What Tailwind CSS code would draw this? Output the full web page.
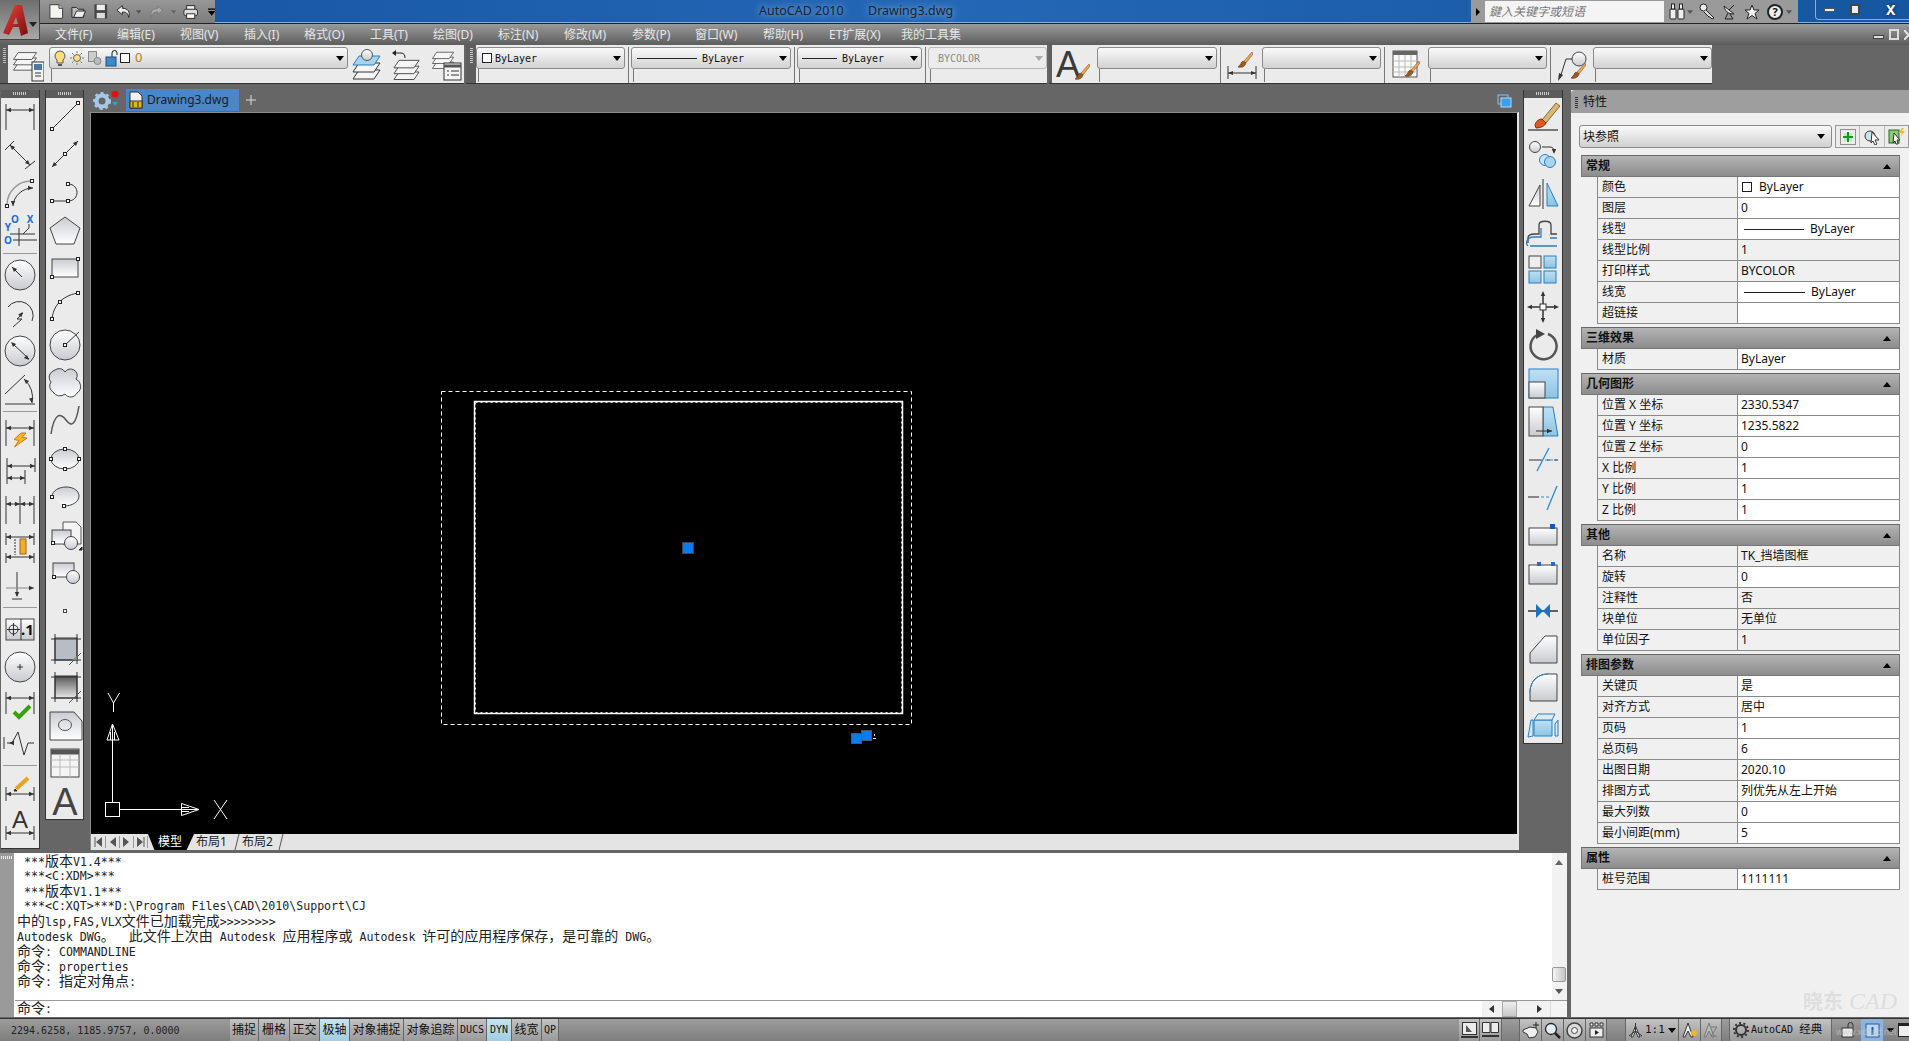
<!DOCTYPE html>
<html lang="zh-CN">
<head>
<meta charset="UTF-8">
<title>AutoCAD 2010 - Drawing3.dwg</title>
<script src="https://cdn.jsdelivr.net/npm/@tailwindcss/browser@4"></script>
</head>
<body class="bg-[#666666] overflow-hidden">
<!-- shared gradients and repeated glyphs -->
<svg class="absolute w-0 h-0">
  <defs>
    <linearGradient id="g" x1="0" y1="0" x2="0" y2="1"><stop offset="0" stop-color="#c9ccd2"/><stop offset="1" stop-color="#ffffff"/></linearGradient>
    <linearGradient id="gd" x1="0" y1="0" x2="0" y2="1"><stop offset="0" stop-color="#ffffff"/><stop offset="1" stop-color="#c8cacf"/></linearGradient>
    <linearGradient id="gb" x1="0" y1="0" x2="0" y2="1"><stop offset="0" stop-color="#bfe0f2"/><stop offset="1" stop-color="#8cc4e4"/></linearGradient>
    <linearGradient id="gh" x1="0" y1="0" x2="0" y2="1"><stop offset="0" stop-color="#555555"/><stop offset="1" stop-color="#e8e8e8"/></linearGradient>
    <linearGradient id="gr" x1="0" y1="0" x2="1" y2="1"><stop offset="0" stop-color="#e8453a"/><stop offset="1" stop-color="#7c0d0d"/></linearGradient>
    <symbol id="layers" viewBox="0 0 34 30"><g fill="#f6f6f6" stroke="#333"><path d="M8 18h24l-6 9H2z"/><path d="M8 11h24l-6 9H2z"/><path d="M8 4h24l-6 9H2z"/></g></symbol>
    <symbol id="brush" viewBox="0 0 16 20"><path d="M15 1L7 10l2 2 7-9z" fill="#e9a45c" stroke="#8a5a22" stroke-width=".6"/><path d="M6 10c-2 1-2 4-5 6 3 1 7 0 8-4z" fill="#9b5a24" stroke="#5a3210" stroke-width=".6"/></symbol>
  </defs>
</svg>

<div class="relative w-[1909px] h-[1041px] flex flex-col font-['Noto_Sans','Noto_Sans_CJK_SC',sans-serif] text-[12px] text-[#111] overflow-hidden">

  <!-- title bar -->
  <div class="h-[24px] flex bg-gradient-to-r from-[#1554a2] via-[#2467b6] to-[#14569f] border-b border-[#222] shadow-[inset_0_-1px_0_#7fb0de]">
    <div class="w-[215px] h-[23px] pl-[49px] flex items-center gap-[7px] bg-gradient-to-b from-[#989898] to-[#7c7c7c]">
      <svg class="w-[16px] h-[17px]" viewBox="0 0 16 17"><path d="M1 1h10l4 4v11H1z" fill="#f4f4f0" stroke="#333"/><path d="M11 1v4h4" fill="#ccc" stroke="#333"/></svg>
      <svg class="w-[17px] h-[15px]" viewBox="0 0 17 15"><path d="M1 3h5l2 2h6v9H1z" fill="#bbb" stroke="#222"/><path d="M3 14l3-7h10l-3 7z" fill="#eee" stroke="#222"/></svg>
      <svg class="w-[15px] h-[17px] ml-[1px]" viewBox="0 0 15 17"><rect x=".5" y=".5" width="14" height="16" rx="1" fill="#444"/><rect x="3" y="1" width="9" height="6" fill="#eee"/><rect x="3" y="10" width="9" height="6" fill="#ddd"/></svg>
      <svg class="w-[17px] h-[15px] ml-[1px]" viewBox="0 0 17 15"><path d="M7 1L1 6l6 5V8c4 0 6 1 7 6 2-6-1-10-7-10z" fill="#eee" stroke="#222"/></svg>
      <svg class="w-[6px] h-[4px] -ml-[2px]" viewBox="0 0 8 5"><path d="M0 0h8L4 5z" fill="#555"/></svg>
      <svg class="w-[16px] h-[15px] ml-[1px]" viewBox="0 0 17 15"><path d="M10 1l6 5-6 5V8c-4 0-6 1-7 6-2-6 1-10 7-10z" fill="#aaa" stroke="#777"/></svg>
      <svg class="w-[6px] h-[4px]" viewBox="0 0 8 5"><path d="M0 0h8L4 5z" fill="#666"/></svg>
      <svg class="w-[17px] h-[16px]" viewBox="0 0 17 16"><rect x="4" y="1" width="9" height="5" fill="#eee" stroke="#222"/><rect x="1" y="5" width="15" height="7" rx="2" fill="#ddd" stroke="#222"/><rect x="4" y="10" width="9" height="5" fill="#fff" stroke="#222"/></svg>
      <svg class="w-[8px] h-[8px] ml-[2px]" viewBox="0 0 8 8"><path d="M0 0h8v1.500H0zM0 3h8L4 8z"/></svg>
    </div>
    <div class="pl-[544px] flex items-center h-[23px] text-[12.5px] text-[#1c2430] [text-shadow:0_0_7px_#a9d0f4]">
      <span class="w-[109px]">AutoCAD 2010</span><span>Drawing3.dwg</span>
    </div>
    <div class="ml-auto mr-[111px] w-[327px] h-[23px] flex items-center bg-[#9a9a9a]">
      <svg class="w-[4px] h-[8px] ml-[5px]" viewBox="0 0 4 8"><path d="M0 0l4 4-4 4z"/></svg>
      <div class="ml-[5px] w-[179px] h-[21px] bg-[#f4f4f4] pl-[4px] italic text-[#777] text-[12px] leading-[21px]">鍵入关键字或短语</div>
      <svg class="ml-[5px] w-[16px] h-[17px]" viewBox="0 0 16 17"><g fill="#eee" stroke="#222"><rect x="1" y="6" width="6" height="10" rx="1"/><rect x="9" y="6" width="6" height="10" rx="1"/><rect x="2.500" y="1" width="3" height="5"/><rect x="10.500" y="1" width="3" height="5"/></g></svg>
      <svg class="w-[6px] h-[4px] ml-[2px]" viewBox="0 0 8 5"><path d="M0 0h8L4 5z" fill="#555"/></svg>
      <svg class="ml-[6px] w-[16px] h-[17px]" viewBox="0 0 16 17"><circle cx="4.500" cy="4.500" r="3.500" fill="#eee" stroke="#222"/><path d="M7 7l8 8-2 1-2-2-1 0-5-5" fill="#ddd" stroke="#222"/></svg>
      <svg class="ml-[7px] w-[15px] h-[17px]" viewBox="0 0 15 17"><path d="M2 3c1 5 4 8 10 8z" fill="#eee" stroke="#222"/><path d="M6 10l-3 6h8L8 11M7 7l5-5" stroke="#222" fill="none"/></svg>
      <svg class="ml-[7px] w-[16px] h-[16px]" viewBox="0 0 16 16"><path d="M8 1l2 5h5l-4 3.500 2 5.500-5-3.500L3 15l2-5.500L1 6h5z" fill="#f2f2f2" stroke="#222"/></svg>
      <span class="ml-[7px] w-[16px] h-[16px] rounded-full border-2 border-[#222] bg-[#eee] text-[11px] leading-[12px] text-center font-bold">?</span>
      <svg class="w-[6px] h-[4px] ml-[3px]" viewBox="0 0 8 5"><path d="M0 0h8L4 5z" fill="#555"/></svg>
    </div>
  </div>
  <!-- window buttons over the title bar -->
  <div class="absolute left-[1815px] top-0 w-[94px] h-[20px] border-l border-b border-[#7fb0de] rounded-bl-[4px] flex items-center text-white">
    <span class="ml-[8px] w-[11px] h-[4px] bg-[#e8eef4] border border-[#555]"></span>
    <span class="ml-[15px] w-[10px] h-[11px] border-2 border-[#444] bg-[#e8eef4]"></span>
    <span class="ml-[26px] font-bold text-[14px] leading-none [text-shadow:0_0_3px_#222]">X</span>
  </div>

  <!-- application button -->
  <div class="absolute left-0 top-0 w-[40px] h-[40px] bg-gradient-to-b from-[#6e6e6e] to-[#a8a8a8] border-r border-b border-[#444]">
    <svg class="absolute left-[3px] top-[3px] w-[30px] h-[34px]" viewBox="0 0 30 34"><path d="M12 2h7l6 28-7 3-2-9h-6l-4 8-6-2z" fill="url(#gr)"/><path d="M13 14l-3 7h5z" fill="#8e8e8e"/></svg>
    <svg class="absolute left-[29px] top-[22px] w-[8px] h-[5px]" viewBox="0 0 8 5"><path d="M0 0h8L4 5z" fill="#222"/></svg>
  </div>

  <!-- menu bar -->
  <div class="h-[21px] flex items-center pl-[55px] bg-gradient-to-b from-[#9a9a9a] via-[#7c7c7c] to-[#5c5c5c] text-[#e6e6e6]">
    <span class="w-[62px]">文件(F)</span><span class="w-[63px]">编辑(E)</span><span class="w-[64px]">视图(V)</span><span class="w-[60px]">插入(I)</span><span class="w-[66px]">格式(O)</span><span class="w-[63px]">工具(T)</span><span class="w-[65px]">绘图(D)</span><span class="w-[66px]">标注(N)</span><span class="w-[68px]">修改(M)</span><span class="w-[63px]">参数(P)</span><span class="w-[68px]">窗口(W)</span><span class="w-[66px]">帮助(H)</span><span class="w-[72px]">ET扩展(X)</span><span>我的工具集</span>
    <div class="ml-auto flex items-center gap-[5px]">
      <span class="w-[11px] h-[4px] bg-[#ddd] border border-[#444] mt-[4px]"></span>
      <span class="w-[10px] h-[11px] border-2 border-[#ddd]"></span>
      <svg class="w-[5px] h-[10px]" viewBox="0 0 5 10"><path d="M0 0l9 10M9 0L0 10" stroke="#e6e6e6" stroke-width="2"/></svg>
    </div>
  </div>

  <!-- toolbars -->
  <div class="h-[39px] flex gap-[2px] font-['DejaVu_Sans_Mono',monospace] text-[10px]">
    <!-- layer toolbar -->
    <div class="w-[464px] flex bg-[#ebebeb] border-b border-[#333]">
      <div class="w-[8px] h-full bg-[#5e5e5e] pt-[3px] pl-[3px]"><div class="w-[3px] h-[15px] bg-[repeating-linear-gradient(0deg,#bbb_0_1px,transparent_1px_2px)]"></div></div>
      <div class="w-[41px] pt-[3px] pl-[4px]">
        <svg class="w-[32px] h-[34px]" viewBox="0 0 32 34"><use href="#layers" width="26" height="24" y="1"/><rect x="20" y="14" width="12" height="19" fill="#f2f2f2" stroke="#333"/><rect x="22" y="16" width="8" height="6" fill="#4a7aa8"/><path d="M23 25h6M23 28h6" stroke="#333"/></svg>
      </div>
      <div class="w-[299px] pt-[2px]">
        <div class="h-[22px] flex items-center rounded-[3px] border border-[#8a8a8a] bg-gradient-to-b from-[#fafafa] to-[#d2d2d2] pl-[4px] pr-[3px] font-['Noto_Sans']">
          <svg class="w-[12px] h-[17px]" viewBox="0 0 12 17"><path d="M6 1a5 5 0 0 1 3 9v3H3v-3a5 5 0 0 1 3-9z" fill="#f7e07c" stroke="#555"/><path d="M4 15h4" stroke="#555" stroke-width="2"/></svg>
          <svg class="w-[14px] h-[14px] ml-[4px]" viewBox="0 0 14 14"><circle cx="7" cy="7" r="3.500" fill="#f7e07c" stroke="#666"/><path d="M7 0v2M7 12v2M0 7h2M12 7h2M2 2l1.500 1.500M10.500 10.500L12 12M2 12l1.500-1.500M10.500 3.500L12 2" stroke="#777"/></svg>
          <svg class="w-[14px] h-[15px] ml-[4px]" viewBox="0 0 14 15"><rect x=".5" y=".5" width="8" height="10" fill="#ccc" stroke="#888"/><circle cx="9.500" cy="10" r="3.500" fill="#bbb" stroke="#888"/></svg>
          <svg class="w-[13px] h-[17px] ml-[3px]" viewBox="0 0 13 17"><path d="M7 7V3a2.500 2.500 0 0 1 5 0v2" fill="none" stroke="#222"/><rect x="1" y="7" width="10" height="9" fill="#3d8ac8" stroke="#1c4f82"/></svg>
          <span class="w-[10px] h-[10px] bg-white border border-[#222] ml-[2px]"></span>
          <span class="ml-[5px] text-[13px] text-[#b87a22]">0</span>
          <svg class="ml-auto w-[8px] h-[5px]" viewBox="0 0 8 5"><path d="M0 0h8L4 5z"/></svg>
        </div>
        <div class="h-[13px] border-l border-[#777] ml-[2px]"></div>
      </div>
      <svg class="ml-[4px] mt-[3px] w-[30px] h-[34px]" viewBox="0 0 30 34"><g stroke="#333"><path d="M7 22h21l-6 9H1z" fill="#f6f6f6"/><path d="M7 15h21l-6 9H1z" fill="#f6f6f6"/><path d="M7 8h21l-6 9H1z" fill="#a4d4f2" stroke="#2a7fc0"/></g><circle cx="15" cy="7" r="5.500" fill="url(#gd)" stroke="#555"/></svg>
      <svg class="ml-[10px] mt-[3px] w-[29px] h-[34px]" viewBox="0 0 29 34"><use href="#layers" width="29" height="25" y="9"/><path d="M2 5h7c3 0 4 2 4 5" fill="none" stroke="#222"/><path d="M0 5l4-3v6z" fill="#222"/></svg>
      <svg class="ml-[10px] mt-[3px] w-[31px] h-[34px]" viewBox="0 0 31 34"><use href="#layers" width="24" height="22" y="1"/><rect x="13" y="15" width="17" height="17" fill="#f4f4f4" stroke="#333"/><path d="M13 18h17" stroke="#555" stroke-width="3"/><path d="M16 23h2M20 23h8M16 27h2M20 27h8" stroke="#333"/></svg>
    </div>
    <!-- properties toolbar -->
    <div class="w-[581px] flex bg-[#ebebeb] border-b border-[#333]">
      <div class="w-[10px] h-full bg-[#5e5e5e] pt-[3px] pl-[4px]"><div class="w-[3px] h-[15px] bg-[repeating-linear-gradient(0deg,#ccc_0_1px,transparent_1px_2px)]"></div></div>
      <div class="w-[149px] pt-[2px]">
        <div class="h-[22px] flex items-center rounded-[3px] border border-[#8a8a8a] bg-gradient-to-b from-[#fafafa] to-[#d2d2d2] pl-[5px] pr-[3px]"><span class="w-[10px] h-[10px] bg-white border border-[#222] mr-[3px]"></span>ByLayer<svg class="ml-auto w-[8px] h-[5px]" viewBox="0 0 8 5"><path d="M0 0h8L4 5z"/></svg></div>
        <div class="h-[13px] border-l border-[#777] ml-[2px]"></div>
      </div>
      <div class="w-[6px] flex justify-center"><div class="w-px h-[36px] mt-[2px] bg-[#777]"></div></div>
      <div class="w-[160px] pt-[2px]">
        <div class="h-[22px] flex items-center rounded-[3px] border border-[#8a8a8a] bg-gradient-to-b from-[#fafafa] to-[#d2d2d2] pl-[5px] pr-[3px]"><span class="w-[60px] h-px bg-[#222] mr-[5px]"></span>ByLayer<svg class="ml-auto w-[8px] h-[5px]" viewBox="0 0 8 5"><path d="M0 0h8L4 5z"/></svg></div>
        <div class="h-[13px] border-l border-[#777] ml-[2px]"></div>
      </div>
      <div class="w-[6px] flex justify-center"><div class="w-px h-[36px] mt-[2px] bg-[#777]"></div></div>
      <div class="w-[125px] pt-[2px]">
        <div class="h-[22px] flex items-center rounded-[3px] border border-[#8a8a8a] bg-gradient-to-b from-[#fafafa] to-[#d2d2d2] pl-[4px] pr-[3px]"><span class="w-[35px] h-px bg-[#222] mr-[5px]"></span>ByLayer<svg class="ml-auto w-[8px] h-[5px]" viewBox="0 0 8 5"><path d="M0 0h8L4 5z"/></svg></div>
        <div class="h-[13px] border-l border-[#777] ml-[2px]"></div>
      </div>
      <div class="w-[6px] flex justify-center"><div class="w-px h-[36px] mt-[2px] bg-[#777]"></div></div>
      <div class="w-[119px] pt-[2px]">
        <div class="h-[22px] flex items-center rounded-[3px] border border-[#bbb] bg-[#ececec] pl-[9px] pr-[3px] text-[#8a8a8a]">BYCOLOR<svg class="ml-auto w-[8px] h-[5px]" viewBox="0 0 8 5"><path d="M0 0h8L4 5z" fill="#aaa"/></svg></div>
        <div class="h-[13px] border-l border-[#777] ml-[2px]"></div>
      </div>
    </div>
    <!-- styles toolbar -->
    <div class="w-[663px] flex bg-[#ebebeb] border-b border-[#333]">
      <div class="w-[3px] h-full bg-[#5e5e5e]"></div>
      <div class="w-[45px] pl-[2px] pt-[3px]">
        <div class="relative w-[40px] h-[34px]"><span class="absolute left-[2px] -top-[5px] font-['Liberation_Sans'] text-[36px] leading-[44px] text-[#3a3a3a]">A</span><svg class="absolute left-[20px] top-[15px] w-[16px] h-[20px]"><use href="#brush"/></svg></div>
      </div>
      <div class="w-[120px] pt-[2px]">
        <div class="h-[22px] flex items-center rounded-[3px] border border-[#8a8a8a] bg-gradient-to-b from-[#fafafa] to-[#d2d2d2] pr-[3px]"><svg class="ml-auto w-[8px] h-[5px]" viewBox="0 0 8 5"><path d="M0 0h8L4 5z"/></svg></div>
        <div class="h-[13px] border-l border-[#777] ml-[2px]"></div>
      </div>
      <div class="w-[45px] pl-[3px] flex">
        <div class="w-px h-[36px] mt-[2px] bg-[#777]"></div>
        <svg class="ml-[6px] mt-[6px] w-[30px] h-[28px]" viewBox="0 0 30 28"><path d="M1 15v13M29 15v13M1 22h28" stroke="#333" fill="none"/><path d="M1 22l5-2v4zM29 22l-5-2v4z" fill="#333"/><use href="#brush" x="10" y="0" width="16" height="20"/></svg>
      </div>
      <div class="w-[119px] pt-[2px]">
        <div class="h-[22px] flex items-center rounded-[3px] border border-[#8a8a8a] bg-gradient-to-b from-[#fafafa] to-[#d2d2d2] pr-[3px]"><svg class="ml-auto w-[8px] h-[5px]" viewBox="0 0 8 5"><path d="M0 0h8L4 5z"/></svg></div>
        <div class="h-[13px] border-l border-[#777] ml-[2px]"></div>
      </div>
      <div class="w-[47px] pl-[3px] flex">
        <div class="w-px h-[36px] mt-[2px] bg-[#777]"></div>
        <svg class="ml-[7px] mt-[5px] w-[28px] h-[30px]" viewBox="0 0 28 30"><rect x="1" y="1" width="24" height="26" fill="#fafafa" stroke="#555"/><path d="M1 3h24" stroke="#666" stroke-width="4"/><path d="M7 5v22M13 5v22M19 5v22M1 11h24M1 17h24M1 22h24" stroke="#bbb"/><use href="#brush" x="12" y="10" width="16" height="20"/></svg>
      </div>
      <div class="w-[119px] pt-[2px]">
        <div class="h-[22px] flex items-center rounded-[3px] border border-[#8a8a8a] bg-gradient-to-b from-[#fafafa] to-[#d2d2d2] pr-[3px]"><svg class="ml-auto w-[8px] h-[5px]" viewBox="0 0 8 5"><path d="M0 0h8L4 5z"/></svg></div>
        <div class="h-[13px] border-l border-[#777] ml-[2px]"></div>
      </div>
      <div class="w-[46px] pl-[3px] flex">
        <div class="w-px h-[36px] mt-[2px] bg-[#777]"></div>
        <svg class="ml-[6px] mt-[5px] w-[30px] h-[32px]" viewBox="0 0 30 32"><circle cx="22" cy="9" r="7" fill="url(#gd)" stroke="#444"/><path d="M15 9H9L3 28" fill="none" stroke="#333"/><path d="M1 31l1-8 4 2z" fill="#333"/><use href="#brush" x="13" y="12" width="16" height="20"/></svg>
      </div>
      <div class="flex-1 pt-[2px]">
        <div class="h-[22px] flex items-center rounded-[3px] border border-[#8a8a8a] bg-gradient-to-b from-[#fafafa] to-[#d2d2d2] pr-[3px]"><svg class="ml-auto w-[8px] h-[5px]" viewBox="0 0 8 5"><path d="M0 0h8L4 5z"/></svg></div>
        <div class="h-[13px] border-l border-[#777] ml-[2px]"></div>
      </div>
    </div>
  </div>

  <!-- main area -->
  <div class="flex-1 flex min-h-0">
    <div class="w-[1567px] flex flex-col">
      <div class="h-[769px] flex">
        <!-- draw and dimension toolbars -->
        <div class="w-[90px] pt-[6px] flex items-start pl-[1px] gap-[5px]">
          <div class="w-[39px] h-[759px] bg-[#ebebeb] border-r border-b border-[#333]">
            <div class="h-[8px] bg-[#5c5c5c] flex justify-center pt-[2px]"><div class="w-[14px] h-[3px] bg-[repeating-linear-gradient(90deg,#ccc_0_1px,transparent_1px_2px)]"></div></div>
            <div id="dimTools"></div>
          </div>
          <div class="w-[39px] h-[730px] bg-[#ebebeb] border border-t-0 border-[#333]">
            <div class="h-[8px] bg-[#5c5c5c] flex justify-center pt-[2px]"><div class="w-[14px] h-[3px] bg-[repeating-linear-gradient(90deg,#ccc_0_1px,transparent_1px_2px)]"></div></div>
            <div id="drawTools"></div>
          </div>
        </div>

        <!-- drawing area -->
        <div class="w-[1429px] flex flex-col">
          <div class="h-[28px] relative">
            <div class="absolute left-[36px] top-[5px] w-[113px] h-[22px] bg-[#4a86c8] flex items-center pl-[3px] text-[12px] text-[#1c1c1c] font-['Noto_Sans']">
              <svg class="w-[14px] h-[18px] mr-[4px]" viewBox="0 0 14 18"><path d="M1 1h8l4 4v12H1z" fill="#eef2f6" stroke="#333"/><rect x="1" y="10" width="12" height="7" fill="#e6b422" stroke="#333"/><path d="M4 11v5M9 11v5" stroke="#222"/></svg>Drawing3.dwg
            </div>
            <svg class="absolute left-[2px] top-[7px] w-[28px] h-[20px]" viewBox="0 0 28 20"><circle cx="10" cy="10" r="5.500" fill="none" stroke="#a8c8e8" stroke-width="4"/><circle cx="10" cy="10" r="8" fill="none" stroke="#a8c8e8" stroke-width="2" stroke-dasharray="3 3"/><circle cx="23" cy="3" r="3.500" fill="#e01010"/><path d="M20 11h6l-3 4z" fill="#3a9ae0"/></svg>
            <svg class="absolute left-[156px] top-[11px] w-[10px] h-[10px]" viewBox="0 0 10 10"><path d="M5 0v10M0 5h10" stroke="#ddd"/></svg>
            <svg class="absolute left-[1407px] top-[10px] w-[15px] h-[14px]" viewBox="0 0 15 14"><rect x="1" y="1" width="10" height="9" fill="none" stroke="#7cc4f4"/><rect x="4" y="4" width="10" height="9" fill="#3aa0ea" stroke="#a8dcff"/></svg>
          </div>
          <div class="h-[722px] bg-black border-l border-t border-[#8c8c8c] border-r-2 border-r-[#e4e4e4]">
            <svg class="w-full h-full" viewBox="91 113 1426 721">
              <rect x="441.500" y="391.500" width="470" height="333" fill="none" stroke="#fff" stroke-dasharray="4 3"/>
              <rect x="474.500" y="401.500" width="428" height="312" fill="none" stroke="#fff" stroke-width="1.500"/>
              <rect x="475.500" y="402.500" width="426" height="310" fill="none" stroke="#ddd" stroke-dasharray="2 3"/>
              <rect x="682.500" y="542.500" width="11" height="11" fill="#0a7cf0" stroke="#444"/>
              <rect x="851.500" y="733.500" width="10" height="10" fill="#0a7cf0" stroke="#555"/>
              <rect x="861.500" y="730.500" width="10" height="10" fill="#0a7cf0" stroke="#555"/>
              <path d="M874.500 734v2M874.500 738v1M873 738.500h3" stroke="#fff"/>
              <g fill="none" stroke="#fff">
                <rect x="105.500" y="802.500" width="14" height="14"/>
                <path d="M112.500 802V740M119 809.500H181"/>
                <path d="M112.500 724L107 740H119zM112.500 724v16M110.500 732v8M114.500 732v8"/>
                <path d="M199 809.500L181.500 803.500v12zM181.500 809.500H199M189 807.500h-7M189 811.500h-7"/>
                <path d="M108 693l5.500 10 6-10M113.500 703v9"/>
                <path d="M214 800l13 19M227 800l-13 19"/>
              </g>
            </svg>
          </div>
          <!-- layout tabs -->
          <div class="h-[16px] bg-[#e4e4e4] border-l border-[#8c8c8c] flex items-center text-[12px] leading-none">
            <svg class="w-[57px] h-[16px]" viewBox="0 0 57 16"><g stroke="#999" fill="none"><path d="M14.500 2v12M28.500 2v12M42.500 2v12M56.500 2v12"/></g><g fill="#555"><path d="M11 3v10L5 8zM25 3v10l-6-5zM32 3v10l6-5zM46 3v10l6-5z"/><path d="M4 3v10M53 3v10" stroke="#555"/></g></svg>
            <span class="h-[16px] w-[46px] pl-[10px] bg-black text-white leading-[16px] [clip-path:polygon(0_0,100%_0,84%_100%,14%_100%)]">模型</span>
            <span class="w-[40px] pl-[2px] text-[#222]">布局1</span>
            <svg class="w-[6px] h-[16px]" viewBox="0 0 6 16"><path d="M1 16L5 0" stroke="#555"/></svg>
            <span class="w-[38px] pl-[2px] text-[#222]">布局2</span>
            <svg class="w-[6px] h-[16px]" viewBox="0 0 6 16"><path d="M1 16L5 0" stroke="#555"/></svg>
          </div>
        </div>

        <!-- modify toolbar -->
        <div class="ml-[4px] pt-[6px]">
          <div class="w-[40px] h-[654px] bg-[#ebebeb] border border-t-0 border-[#333]">
            <div class="h-[8px] bg-[#5c5c5c] flex justify-center pt-[2px]"><div class="w-[14px] h-[3px] bg-[repeating-linear-gradient(90deg,#ccc_0_1px,transparent_1px_2px)]"></div></div>
            <div id="modifyTools"></div>
          </div>
        </div>
      </div>

      <!-- command window -->
      <div class="h-[164px] flex">
        <div class="w-[15px] bg-[#9a9a9a] border-r border-white pt-[3px] pl-[1px]"><div class="w-[11px] h-[3px] bg-[repeating-linear-gradient(90deg,#eee_0_1px,transparent_1px_2px)]"></div></div>
        <div class="flex-1 bg-white flex flex-col font-['DejaVu_Sans_Mono','Noto_Sans_CJK_SC',monospace] text-[11.6px] text-[#222]">
          <div class="h-[147px] flex">
            <div id="cmdLog" class="flex-1 pt-[1px] pl-[2px] whitespace-pre"></div>
            <div class="w-[15px] bg-[#f2f2f2] relative">
              <svg class="absolute left-[3px] top-[7px] w-[8px] h-[5px]" viewBox="0 0 8 5"><path d="M4 0l4 5H0z" fill="#666"/></svg>
              <div class="absolute left-0 top-[114px] w-[14px] h-[15px] border border-[#999] rounded-[2px] bg-gradient-to-r from-[#f4f4f4] to-[#c4c4c4]"></div>
              <svg class="absolute left-[3px] top-[136px] w-[8px] h-[5px]" viewBox="0 0 8 5"><path d="M0 0h8L4 5z" fill="#555"/></svg>
            </div>
          </div>
          <div class="h-[17px] border-t border-[#999] flex">
            <div class="flex-1 pl-[2px] leading-[16px]"><span class="text-[14px] leading-none">命令</span>:</div>
            <div class="w-[68px] bg-[#f2f2f2] relative">
              <svg class="absolute left-[7px] top-[4px] w-[5px] h-[8px]" viewBox="0 0 5 8"><path d="M5 0v8L0 4z" fill="#333"/></svg>
              <div class="absolute left-[20px] top-0 w-[15px] h-[16px] border border-[#aaa] bg-gradient-to-b from-[#eee] to-[#c8c8c8]"></div>
              <svg class="absolute left-[55px] top-[4px] w-[5px] h-[8px]" viewBox="0 0 5 8"><path d="M0 0v8l5-4z" fill="#333"/></svg>
            </div>
            <div class="w-[17px] bg-[#f4f4f4] border-l border-[#ddd]"></div>
          </div>
        </div>
      </div>
    </div>

    <!-- properties palette -->
    <div class="ml-[4px] mt-[6px] w-[338px] h-[927px] flex flex-col bg-[#f0f0f0] relative">
      <div class="h-[23px] bg-[#9e9e9e] rounded-tl-[4px] flex items-center pl-[4px]">
        <div class="w-[3px] h-[12px] bg-[repeating-linear-gradient(0deg,#333_0_1px,transparent_1px_2px)]"></div>
        <span class="ml-[5px]">特性</span>
      </div>
      <div class="h-[42px] flex items-center pl-[8px] pt-[5px]">
        <div class="w-[253px] h-[23px] flex items-center rounded-[3px] border border-[#8a8a8a] bg-gradient-to-b from-[#fafafa] to-[#d0d0d0] pl-[3px] pr-[6px]">块参照<svg class="ml-auto w-[8px] h-[5px]" viewBox="0 0 8 5"><path d="M0 0h8L4 5z"/></svg></div>
        <div class="ml-[3px] flex h-[23px] bg-[#ececec] border border-[#999]">
          <div class="w-[24px] border-r border-[#bbb] flex items-center justify-center"><svg class="w-[16px] h-[16px]" viewBox="0 0 16 16"><rect x=".5" y=".5" width="15" height="15" fill="none" stroke="#333" stroke-dasharray="1 1"/><rect x="4" y="4" width="8" height="8" fill="#bfe8bf"/><path d="M8 3v10M3 8h10" stroke="#0a9a20" stroke-width="2"/></svg></div>
          <div class="w-[25px] border-r border-[#bbb] flex items-center justify-center"><svg class="w-[17px] h-[16px]" viewBox="0 0 17 16"><circle cx="6" cy="7" r="5" fill="#cde4f0" stroke="#333"/><path d="M8 3l7 8-4 0 2 4-2 1-2-4-2 2z" fill="#fff" stroke="#333"/></svg></div>
          <div class="w-[23px] flex items-center justify-center"><svg class="w-[17px] h-[17px]" viewBox="0 0 17 17"><rect x="1" y="2" width="10" height="13" fill="#8cc878" stroke="#1e6a1e"/><path d="M6 5l6 7-3 0 1 4-2 0-1-3-2 2z" fill="#fff" stroke="#333"/><path d="M14 0l-3 5h3l-2 4 5-6h-3l2-3z" fill="#f4b622"/></svg></div>
        </div>
      </div>
      <div id="propGrid" class="pl-[10px] w-[329px]"></div>
      <!-- watermark -->
      <div class="absolute left-[232px] top-[899px] flex items-baseline text-[#dedede] leading-none">
        <span class="text-[20px] font-bold">晓东</span><span class="ml-[6px] text-[24px] italic font-['Liberation_Serif']">CAD</span>
      </div>
    </div>
  </div>

  <!-- status bar -->
  <div class="h-[23px] flex items-stretch border-t border-[#333] bg-gradient-to-b from-[#9c9c9c] to-[#7e7e7e] relative">
    <div class="w-[230px] pl-[11px] flex items-center font-['DejaVu_Sans_Mono',monospace] text-[10px] text-[#222]">2294.6258, 1185.9757, 0.0000</div>
    <div class="flex text-[#111] text-center leading-[21px]">
      <span class="w-[29px] border-r border-[#666] bg-gradient-to-b from-[#c2c2c2] to-[#9a9a9a]">捕捉</span>
      <span class="w-[31px] border-r border-[#666] bg-gradient-to-b from-[#c2c2c2] to-[#9a9a9a]">栅格</span>
      <span class="w-[30px] border-r border-[#666] bg-gradient-to-b from-[#c2c2c2] to-[#9a9a9a]">正交</span>
      <span class="w-[30px] border-r border-[#666] bg-gradient-to-b from-[#c4e4f2] to-[#a2cde0]">极轴</span>
      <span class="w-[54px] border-r border-[#666] bg-gradient-to-b from-[#c2c2c2] to-[#9a9a9a]">对象捕捉</span>
      <span class="w-[54px] border-r border-[#666] bg-gradient-to-b from-[#c2c2c2] to-[#9a9a9a]">对象追踪</span>
      <span class="w-[29px] border-r border-[#666] bg-gradient-to-b from-[#c2c2c2] to-[#9a9a9a] font-['DejaVu_Sans_Mono'] text-[10px]">DUCS</span>
      <span class="w-[25px] border-r border-[#666] bg-gradient-to-b from-[#c4e4f2] to-[#a2cde0] font-['DejaVu_Sans_Mono'] text-[10px]">DYN</span>
      <span class="w-[30px] border-r border-[#666] bg-gradient-to-b from-[#c2c2c2] to-[#9a9a9a]">线宽</span>
      <span class="w-[17px] border-r border-[#666] bg-gradient-to-b from-[#c2c2c2] to-[#9a9a9a] font-['DejaVu_Sans_Mono'] text-[10px]">QP</span>
    </div>
    <div class="ml-[900px] flex items-stretch font-['DejaVu_Sans_Mono','Noto_Sans_CJK_SC',monospace] text-[10px]">
      <span class="w-[21px] border-r border-[#666] flex items-center justify-center bg-gradient-to-b from-[#c2c2c2] to-[#9a9a9a]"><svg class="w-[17px] h-[17px]" viewBox="0 0 17 17"><rect x="1.500" y=".5" width="14" height="12" fill="#ececec" stroke="#333"/><path d="M5 10V3l6 7z" fill="#555"/><path d="M0 15h17" stroke="#333" stroke-width="2"/></svg></span>
      <span class="w-[22px] border-r border-[#666] flex items-center justify-center bg-gradient-to-b from-[#c2c2c2] to-[#9a9a9a]"><svg class="w-[17px] h-[17px]" viewBox="0 0 17 17"><path d="M.5.5h7.500v10H.5zM9 .5h7.500v10H9z" fill="#ececec" stroke="#333"/><path d="M0 14h17" stroke="#333" stroke-width="2"/></svg></span>
      <span class="w-[18px] border-r border-[#666]"></span>
      <span class="w-[22px] border-r border-[#666] flex items-center justify-center bg-gradient-to-b from-[#c2c2c2] to-[#9a9a9a]"><svg class="w-[18px] h-[17px]" viewBox="0 0 18 17"><path d="M1 8l7-3 6 1 2 4-3 5-6 1-2-4-4-2z" fill="#eee" stroke="#333"/><path d="M14 0v6M11 3h6" stroke="#222"/></svg></span>
      <span class="w-[22px] border-r border-[#666] flex items-center justify-center bg-gradient-to-b from-[#c2c2c2] to-[#9a9a9a]"><svg class="w-[17px] h-[17px]" viewBox="0 0 17 17"><circle cx="7" cy="7" r="5.500" fill="#dfeef8" stroke="#222" stroke-width="1.300"/><path d="M11 11l5 5" stroke="#222" stroke-width="2.500"/></svg></span>
      <span class="w-[22px] border-r border-[#666] flex items-center justify-center bg-gradient-to-b from-[#c2c2c2] to-[#9a9a9a]"><svg class="w-[17px] h-[17px]" viewBox="0 0 17 17"><circle cx="8.500" cy="8.500" r="7.500" fill="#ddd" stroke="#444" stroke-width="1.500"/><circle cx="8.500" cy="8.500" r="3" fill="#f2f2f2" stroke="#444"/></svg></span>
      <span class="w-[21px] border-r border-[#666] flex items-center justify-center bg-gradient-to-b from-[#c2c2c2] to-[#9a9a9a]"><svg class="w-[15px] h-[16px]" viewBox="0 0 15 16"><path d="M1 1h3v3H1zM6 1h3v3H6zM11 1h3v3h-3z" fill="#eee" stroke="#333"/><rect x="1" y="6" width="13" height="9" fill="#eee" stroke="#333"/><path d="M6 8l4 2.500L6 13z" fill="#222"/></svg></span>
      <span class="w-[19px] border-r border-[#666]"></span>
      <span class="w-[53px] border-r border-[#666] flex items-center pl-[2px] bg-gradient-to-b from-[#c2c2c2] to-[#9a9a9a]"><svg class="w-[15px] h-[16px]" viewBox="0 0 15 16"><path d="M7.500 1v8M7.500 9L1 14M7.500 9L14 14M7.500 4L3 15h2l2.500-6 2.500 6h2z" fill="#eee" stroke="#333"/></svg><span class="ml-[2px] text-[11px]">1:1</span><svg class="ml-[3px] w-[8px] h-[5px]" viewBox="0 0 8 5"><path d="M0 0h8L4 5z"/></svg></span>
      <span class="w-[22px] border-r border-[#666] flex items-center justify-center bg-gradient-to-b from-[#c2c2c2] to-[#9a9a9a]"><svg class="w-[16px] h-[16px]" viewBox="0 0 16 16"><path d="M6 1L1 15h2l3-6 3 6h2z" fill="#eee" stroke="#333"/><circle cx="12" cy="11" r="3" fill="#f4b622"/></svg></span>
      <span class="w-[21px] border-r border-[#666] flex items-center justify-center bg-gradient-to-b from-[#c2c2c2] to-[#9a9a9a]"><svg class="w-[16px] h-[16px]" viewBox="0 0 16 16"><path d="M6 1L1 15h2l3-6 3 6h2z" fill="#bbb" stroke="#777"/><path d="M8 5h6L8 14h6" fill="none" stroke="#777"/></svg></span>
      <span class="w-[7px]"></span>
      <span class="w-[103px] border-l border-r border-[#666] flex items-center pl-[3px] bg-gradient-to-b from-[#c2c2c2] to-[#9a9a9a]"><svg class="w-[16px] h-[16px]" viewBox="0 0 16 16"><circle cx="8" cy="8" r="5" fill="none" stroke="#333" stroke-width="2"/><circle cx="8" cy="8" r="7" fill="none" stroke="#333" stroke-width="2" stroke-dasharray="2 2.400"/></svg><span class="ml-[2px]">AutoCAD <span class="text-[11.500px]">经典</span></span></span>
      <span class="w-[4px]"></span>
      <span class="w-[23px] flex items-center justify-center"><svg class="w-[14px] h-[16px]" viewBox="0 0 14 16"><rect x="1" y="6" width="11" height="9" fill="#ececec" stroke="#333"/><path d="M7 6V3a2.500 2.500 0 0 1 5 0v2" fill="none" stroke="#333"/></svg></span>
      <span class="w-[22px] ml-[2px] flex items-center justify-center bg-[#8fb4dc]"><svg class="w-[15px] h-[16px]" viewBox="0 0 15 16"><rect x="1" y="2" width="13" height="13" fill="#bcd8f4" stroke="#2a5a9a"/><path d="M7.500 5v8" stroke="#2a5a9a" stroke-width="2"/></svg></span>
      <svg class="ml-[4px] mt-[9px] w-[7px] h-[5px]" viewBox="0 0 8 5"><path d="M0 0h8L4 5z"/></svg>
      <span class="ml-[4px] w-[11px] h-[14px] mt-[4px] border border-[#222] border-r-0 border-t-[3px] bg-[#eee]"></span>
    </div>
    <span class="absolute left-[1836px] top-[7px] text-[9px] text-[#c8c8c8]/70 font-['Liberation_Sans']">www.xdcad.net</span>
  </div>
</div>

<script>
  // helpers for the tool icons, each icon drawn 1:1 in a 38x38 box
  const sq = (x, y) => `<rect x="${x - 1.5}" y="${y - 1.5}" width="3" height="3" fill="#fff" stroke="#222"/>`;
  const ar = (x, y, a) => `<path transform="translate(${x} ${y}) rotate(${a})" d="M0 0l-5-2.200v4.400z" fill="#333" stroke="none"/>`;
  const shade = 'fill="url(#g)" stroke="#444"';
  const glossy = 'fill="url(#gd)" stroke="#444"';
  const blue = 'fill="url(#gb)" stroke="#2a7fc0"';
  const dimTop = (y) => `<path d="M5 6v26M33 6v26M5 ${y}h28"/>` + ar(5, y, 180) + ar(33, y, 0);

  const dimIcons = [
    dimTop(12),
    `<path d="M9 9L29 29M4 14L13 5M24 33L34 25"/>` + ar(9, 9, 225) + ar(29, 29, 45),
    `<path d="M6 30A24 24 0 0 1 30 7" stroke="#999" stroke-width="1.500"/><path d="M12 32A20 19 0 0 1 32 14"/>` + sq(6, 32) + sq(31, 7) + ar(32, 14, 0) + ar(12, 32, 90),
    `<path d="M12 28h24M18 16v18M9 22h25M22 22l6-6v-4"/><text x="14" y="11" font-size="10" font-weight="700" fill="#1a6fd0" stroke="none" text-anchor="middle">O</text><text x="29" y="11" font-size="10" font-weight="700" fill="#1a6fd0" stroke="none" text-anchor="middle">X</text><text x="7" y="19" font-size="10" font-weight="700" fill="#1a6fd0" stroke="none" text-anchor="middle">Y</text><text x="7" y="32" font-size="10" font-weight="700" fill="#1a6fd0" stroke="none" text-anchor="middle">O</text>`,
    'sep',
    `<circle cx="19" cy="19" r="15" ${glossy}/><path d="M21 21L11 11"/>` + ar(11, 11, 225),
    `<path d="M7 13A14 14 0 0 1 31 27M22 19L16 25l5 0L12 33"/>` + ar(22, 18, -50),
    `<circle cx="19" cy="19" r="15" ${glossy}/><path d="M11 11L28 27"/>` + ar(10, 10, 225) + ar(28, 28, 45),
    `<path d="M4 24L24 5M4 34h30M23 9A26 26 0 0 1 31 33"/>` + ar(31, 33, 80) + ar(23, 9, 225),
    'sep',
    dimTop(14) + `<path d="M20 19l-7 6.500 5 1-4.500 6.500L26 24l-5-.500 4-4.500z" fill="#f6b821" stroke="#d4780e"/>`,
    `<path d="M6 6v26M34 6v14M24 18v14M6 14h28M6 26h18"/>` + ar(6, 14, 180) + ar(34, 14, 0) + ar(6, 26, 180) + ar(24, 26, 0),
    `<path d="M5 6v28M19 6v28M33 6v28M5 14h28"/>` + ar(5, 14, 180) + ar(19, 14, 0) + ar(19, 14, 180) + ar(33, 14, 0),
    `<path d="M5 5v12M33 5v12M5 9h28M5 25v10M33 25v10M5 29h28"/>` + ar(5, 9, 180) + ar(33, 9, 0) + ar(5, 29, 180) + ar(33, 29, 0) + `<path d="M14 11v16" stroke-dasharray="2 1"/><rect x="19" y="11" width="6" height="15" fill="#eeb02c" stroke="#9a6a10"/>`,
    `<path d="M16 6v24M11 33h10"/><path d="M5 22h28" stroke="#888"/>` + ar(16, 31, 90) + ar(33, 22, 0),
    'sep',
    `<rect x="5" y="9" width="28" height="21" ${glossy}/><path d="M20 9v21"/><circle cx="12.500" cy="19.500" r="4.500"/><path d="M6 19.500h13M12.500 13v13"/><text x="26.500" y="25" font-size="15" font-weight="700" fill="#111" stroke="none" text-anchor="middle">.1</text>`,
    `<circle cx="19" cy="19" r="15" ${glossy}/><path d="M19 16v6M16 19h6"/>`,
    `<path d="M5 6v22M33 6v22M5 12h28"/>` + ar(5, 12, 180) + ar(33, 12, 0) + `<path d="M13 26l5 5L29 20" stroke="#3aa00a" stroke-width="4"/>`,
    `<path d="M3 13v12M6 19h5L17 8l6 23 4-12h6"/>` + ar(8, 19, 180),
    'sep',
    `<path d="M5 19v14M33 19v14M5 26h28"/>` + ar(5, 26, 180) + ar(33, 26, 0) + `<path d="M15 21L27 10" stroke="#e8a420" stroke-width="4"/><path d="M13 23l1-2 2 2z" fill="#222"/>`,
    `<path d="M5 20v14M33 20v14M5 27h28"/>` + ar(5, 27, 180) + ar(33, 27, 0) + `<text x="19" y="22" font-size="24" font-family="Liberation Sans" fill="#333" stroke="none" text-anchor="middle">A</text>`,
  ];

  const drawIcons = [
    `<path d="M6 31L32 5"/>` + sq(6, 31) + sq(32, 5),
    `<path d="M6 31L32 5"/>` + ar(32, 5, -45) + ar(6, 31, 135) + sq(19, 18),
    `<path d="M6 27H22C34 27 34 10 22 10"/>` + sq(6, 27) + sq(22, 27) + sq(22, 10),
    `<path d="M19 5L34 16 28 32H10L4 16z" ${shade}/>`,
    `<rect x="6" y="9" width="26" height="18" ${shade}/>` + sq(32, 9) + sq(6, 27),
    `<path d="M6 31C7 20 14 8 32 5"/>` + sq(6, 31) + sq(14, 14) + sq(32, 5),
    `<circle cx="19" cy="19" r="15" ${glossy}/><path d="M19 19L33 6"/>` + sq(19, 19),
    `<path d="M11 5a6.500 6.500 0 0 1 8 3 6.500 6.500 0 0 1 9-2 6 6 0 0 1 2 9 8 8 0 0 1 1 14 7 7 0 0 1-12 1 8 8 0 0 1-12-2 7 7 0 0 1-2-10 7 7 0 0 1 2-11z" ${shade}/>`,
    `<path d="M5 32C8 12 14 10 20 18S30 22 33 4" stroke="#555" stroke-width="1.500"/>`,
    `<ellipse cx="19" cy="19" rx="14" ry="10" ${shade}/>` + sq(5, 19) + sq(33, 19) + sq(19, 9) + sq(19, 29),
    `<path d="M6 19C6 12 14 9 20 9 28 9 33 13 33 18 33 24 26 28 18 28" ${shade}/>` + sq(6, 19) + sq(18, 28),
    `<path d="M17 6h13l5 5v17H17z" fill="#f4f4f4" stroke="#555"/><rect x="6" y="14" width="19" height="14" ${shade}/>` + `<circle cx="25" cy="27" r="6.500" ${glossy}/><path d="M33 34h3v-3z" fill="#222" stroke="#222"/>` + sq(7, 27),
    `<rect x="7" y="9" width="21" height="14" ${shade}/><circle cx="27" cy="23" r="6.500" ${glossy}/>` + sq(8, 23),
    `<rect x="17.500" y="17.500" width="3" height="3" fill="#fff" stroke="#444"/>`,
    `<rect x="9" y="8" width="22" height="22" fill="#b8bcc4" stroke="#333"/><path d="M5 9h30M5 30h30M9 4v30M31 4v30"/><path d="M35 23L23 35" stroke="#555"/><path d="M31 26v4h-5z" fill="#888" stroke="none"/>`,
    `<rect x="9" y="8" width="22" height="22" fill="url(#gh)" stroke="#333"/><path d="M5 9h30M5 30h30M9 4v30M31 4v30"/><path d="M35 23L23 35" stroke="#555"/>`,
    `<path d="M4 6h24l8 9v19H4z" ${shade}/><ellipse cx="19" cy="19" rx="6.500" ry="5.500" stroke="#555"/>`,
    `<rect x="5" y="5" width="28" height="28" fill="#f4f4f4" stroke="#444"/><path d="M5 8h28" stroke="#555" stroke-width="5"/><path d="M5 16h28M5 23h28M14 10v23M24 10v23" stroke="#bbb"/>`,
    `<text x="19" y="33" font-size="38" font-family="Liberation Sans" fill="#444" stroke="none" text-anchor="middle">A</text>`,
  ];

  const modifyIcons = [
    `<path d="M32 5L18 22l4 3 14-17z" fill="#d8b878" stroke="#8a6a2a"/><path d="M18 21c-3 0-6 2-7 6l1 3c4 0 9-2 10-5z" fill="#de5a1a" stroke="#8a2a0a"/><path d="M4 32h30" stroke="#555" stroke-width="1.500"/>`,
    `<circle cx="11" cy="11" r="5.500" ${glossy}/><path d="M18 11h8c3 0 4 2 4 5"/>` + ar(30, 18, 90) + `<circle cx="21" cy="24" r="5.500" fill="#c8e4f4" stroke="#2a7fc0"/><circle cx="26" cy="26" r="5.500" fill="#a8d4ec" stroke="#2a7fc0"/>`,
    `<path d="M5 32h11V11z" ${shade}/><path d="M19 5v30" stroke="#333"/><path d="M23 9v23h11z" ${blue}/>`,
    `<path d="M4 31v-5c0-3 3-4 7-4h4V13c0-5 12-5 12 0v9h6" fill="none" stroke="#444" stroke-width="1.300"/><path d="M4 34c-3-3-1-9 6-9h7V16M33 34H6M33 26h-7" fill="none" stroke="#2a7fc0" stroke-width="1.300"/>`,
    `<rect x="5" y="6" width="12" height="12" fill="#eee" stroke="#444"/><rect x="20" y="6" width="12" height="12" ${blue}/><rect x="5" y="21" width="12" height="12" ${blue}/><rect x="20" y="21" width="12" height="12" ${blue}/>`,
    `<rect x="16" y="16" width="6" height="6" fill="#fff" stroke="#333"/><path d="M19 16V7M19 22v9M16 19H7M22 19h9" stroke="#333" stroke-width="1.500"/>` + ar(19, 3, -90) + ar(19, 35, 90) + ar(3, 19, 180) + ar(35, 19, 0),
    `<path d="M13 9A13 13 0 1 0 24 8" stroke="#555" stroke-width="2.500"/><path d="M12 3l9 5-9 5z" fill="#444" stroke="none"/>`,
    `<rect x="5" y="5" width="29" height="29" ${blue}/><rect x="5" y="18" width="16" height="16" ${glossy}/>`,
    `<path d="M19 5h10l5 29H19z" ${blue}/><rect x="5" y="5" width="14" height="29" ${glossy}/><path d="M12 29h16"/>` + ar(28, 29, 0),
    `<path d="M5 20h13M23 20h3M30 20h4" stroke="#333" stroke-width="1"/><path d="M25 8L13 31" stroke="#2a8ad4" stroke-width="1.300"/><path d="M21 20h13" stroke="#2a8ad4" stroke-dasharray="3 2"/>`,
    `<path d="M4 19h11" stroke="#222"/><path d="M17 19h8" stroke="#2a8ad4" stroke-dasharray="3 2"/><path d="M23 32L33 8" stroke="#2a8ad4" stroke-width="1.300"/>`,
    `<rect x="5" y="12" width="28" height="17" ${glossy}/><rect x="26" y="8" width="5" height="5" fill="#0a5ac0" stroke="none"/>`,
    `<rect x="5" y="11" width="28" height="19" ${glossy}/><rect x="13" y="8" width="4" height="4" fill="#2a6ac0" stroke="none"/><rect x="27" y="8" width="4" height="4" fill="#2a6ac0" stroke="none"/>`,
    `<path d="M4 19h30" stroke="#333" stroke-width="1.500"/><path d="M12 12l7 7-7 7zM26 12l-7 7 7 7z" fill="#1a72c0" stroke="none"/>`,
    `<path d="M6 23L21 6h12v27H6z" ${glossy}/>`,
    `<path d="M6 33V24C6 13 14 6 24 6h9v27z" ${glossy}/><path d="M6 24C6 13 14 6 24 6" stroke="#2a8ad4"/>`,
    `<path d="M10 14h18v16H10z" ${blue}/><path d="M14 8h17l-3 6H10z" fill="#dceaf4" stroke="#2a7fc0"/><path d="M4 31l3-17h2v16zM34 30V14l-3 4v12z" fill="#d8e8f2" stroke="#2a7fc0"/>`,
  ];

  const renderIcons = (id, icons) => {
    document.getElementById(id).innerHTML = icons.map(icon => icon === 'sep'
      ? '<div class="h-[6px] flex items-center px-[2px]"><div class="w-full h-px bg-[#999]"></div></div>'
      : `<div class="h-[38px]"><svg class="w-[38px] h-[38px] overflow-visible" viewBox="0 0 38 38"><g fill="none" stroke="#333">${icon}</g></svg></div>`
    ).join('');
  };
  renderIcons('dimTools', dimIcons);
  renderIcons('drawTools', drawIcons);
  renderIcons('modifyTools', modifyIcons);

  // command history, CJK runs are wrapped since they are set larger than the mono latin
  const cjk = s => s.replace(/([\u3000-\u9fff\uff00-\uffef]+)/g, '<span class="text-[14px] leading-none">$1</span>');
  const cmdLines = [
    ' ***版本V1.4***',
    ' ***&lt;C:XDM&gt;***',
    ' ***版本V1.1***',
    ' ***&lt;C:XQT&gt;***D:\\Program Files\\CAD\\2010\\Support\\CJ',
    '中的lsp,FAS,VLX文件已加载完成&gt;&gt;&gt;&gt;&gt;&gt;&gt;&gt;',
    'Autodesk DWG。  此文件上次由 Autodesk 应用程序或 Autodesk 许可的应用程序保存，是可靠的 DWG。',
    '命令: COMMANDLINE',
    '命令: properties',
    '命令: 指定对角点:',
  ];
  document.getElementById('cmdLog').innerHTML = cmdLines
    .map(l => `<div class="h-[15px] leading-[15px]">${cjk(l)}</div>`).join('');

  // properties palette, value cell is grey when the property is read only
  const line = w => `<span class="inline-block ${w} h-px bg-[#222] align-middle ml-[3px] mr-[6px]"></span>ByLayer`;
  const props = [
    ['常规', [
      ['颜色', '<span class="inline-block w-[10px] h-[10px] border border-[#222] align-[-1px] ml-[1px] mr-[7px]"></span>ByLayer', 0],
      ['图层', '0', 0], ['线型', line('w-[60px]'), 0], ['线型比例', '1', 1], ['打印样式', 'BYCOLOR', 1],
      ['线宽', line('w-[61px]'), 0], ['超链接', '', 0]]],
    ['三维效果', [['材质', 'ByLayer', 0]]],
    ['几何图形', [['位置 X 坐标', '2330.5347', 0], ['位置 Y 坐标', '1235.5822', 0], ['位置 Z 坐标', '0', 0], ['X 比例', '1', 0], ['Y 比例', '1', 0], ['Z 比例', '1', 0]]],
    ['其他', [['名称', 'TK_挡墙图框', 1], ['旋转', '0', 0], ['注释性', '否', 1], ['块单位', '无单位', 1], ['单位因子', '1', 1]]],
    ['排图参数', [['关键页', '是', 0], ['对齐方式', '居中', 0], ['页码', '1', 0], ['总页码', '6', 0], ['出图日期', '2020.10', 0], ['排图方式', '列优先从左上开始', 0], ['最大列数', '0', 0], ['最小间距(mm)', '5', 0]]],
    ['属性', [['桩号范围', '1111111', 0]]],
  ];
  document.getElementById('propGrid').innerHTML = props.map(([title, rows]) => `
    <div class="mb-[3px]">
      <div class="h-[22px] flex items-center pl-[4px] pr-[8px] font-bold bg-gradient-to-b from-[#b4b4b4] to-[#8c8c8c] border border-[#777] border-t-[#666]">
        <span>${title}</span>
        <svg class="ml-auto w-[8px] h-[5px]" viewBox="0 0 8 5"><path d="M4 0l4 5H0z"/></svg>
      </div>
      <div class="ml-[16px] border-l border-r border-[#8a8a8a]">
        ${rows.map(([label, value, readOnly]) => `
        <div class="h-[21px] flex border-b border-[#8a8a8a] leading-[20px]">
          <div class="w-[140px] pl-[4px] border-r border-[#8a8a8a] bg-[#f0f0f0]">${label}</div>
          <div class="flex-1 pl-[3px] ${readOnly ? 'bg-[#f0f0f0]' : 'bg-white'}">${value}</div>
        </div>`).join('')}
      </div>
    </div>`).join('');
</script>
</body>
</html>
